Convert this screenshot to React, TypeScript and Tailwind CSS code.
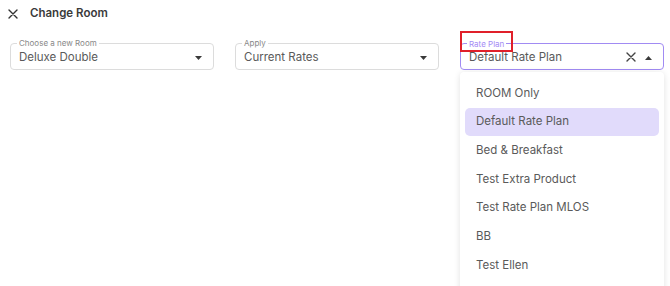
const options = [
  "ROOM Only",
  "Default Rate Plan",
  "Bed & Breakfast",
  "Test Extra Product",
  "Test Rate Plan MLOS",
  "BB",
  "Test Ellen",
];

function Cross({ size, color }: { size: number; color: string }) {
  return (
    <svg width={size} height={size} viewBox="0 0 10 10" className="shrink-0">
      <path d="M1 1 L9 9 M9 1 L1 9" stroke={color} strokeWidth="1.4" strokeLinecap="round" />
    </svg>
  );
}

function Caret({ up = false }: { up?: boolean }) {
  return (
    <svg width="7" height="4" viewBox="0 0 7 4" className="shrink-0">
      <path d={up ? "M0 4 L3.5 0 L7 4 Z" : "M0 0 L3.5 4 L7 0 Z"} fill="#3a3a3a" />
    </svg>
  );
}

function Field({ label, value }: { label: string; value: string }) {
  return (
    <div className="relative h-[27px] w-[204px] rounded-[4px] border border-[#dcdcdc] flex items-center pl-2 pr-[11px] pt-[2px]">
      <span className="absolute -top-[6px] left-[6px] bg-white px-[2px] text-[8px] leading-[10px] text-[#888]">
        {label}
      </span>
      <span className="flex-1 text-[11.5px] text-[#5a5a5a]">{value}</span>
      <Caret />
    </div>
  );
}

export default function App() {
  return (
    <div
      className="relative h-[286px] w-[670px] overflow-hidden bg-white"
      style={{ fontFamily: "Inter, 'Noto Sans', sans-serif" }}
    >
      {/* Header */}
      <div className="flex items-center gap-[12px] pl-[8px] pt-[7px] h-[20px]">
        <Cross size={10} color="#333" />
        <span className="text-[11.5px] font-semibold text-[#3a3a3a]">Change Room</span>
      </div>

      {/* Fields */}
      <div className="mt-[23px] flex gap-[21px] pl-[10px]">
        <Field label="Choose a new Room" value="Deluxe Double" />
        <Field label="Apply" value="Current Rates" />

        <div className="relative w-[204px]">
          <div className="relative h-[27px] rounded-[4px] border border-[#a18bf3] flex items-center pl-2 pr-[11px] pt-[2px]">
            <span className="absolute -top-[5px] left-[6px] bg-white px-[2px] text-[8px] leading-[10px] text-[#a48cf5]">
              Rate Plan
            </span>
            <span className="flex-1 text-[11.5px] text-[#5a5a5a]">Default Rate Plan</span>
            <span className="mr-[9px] -mt-[2px]">
              <Cross size={10} color="#444" />
            </span>
            <Caret up />
          </div>
          {/* annotation box */}
          <div className="absolute left-0 -top-[12px] h-[21px] w-[53px] border-2 border-[#e0202a]" />

          {/* Menu */}
          <div className="absolute left-0 top-[29px] w-[204px] h-[240px] bg-white rounded-[4px] shadow-[0_1px_6px_rgba(0,0,0,0.12)] pt-[7px] px-[5px]">
            {options.map((o) => (
              <div
                key={o}
                className={`h-[28.7px] flex items-center pl-[11px] text-[11.5px] text-[#5a5a5a] rounded-[5px] ${
                  o === "Default Rate Plan" ? "bg-[#e1dbfb]" : ""
                }`}
              >
                {o}
              </div>
            ))}
          </div>
        </div>
      </div>
    </div>
  );
}
